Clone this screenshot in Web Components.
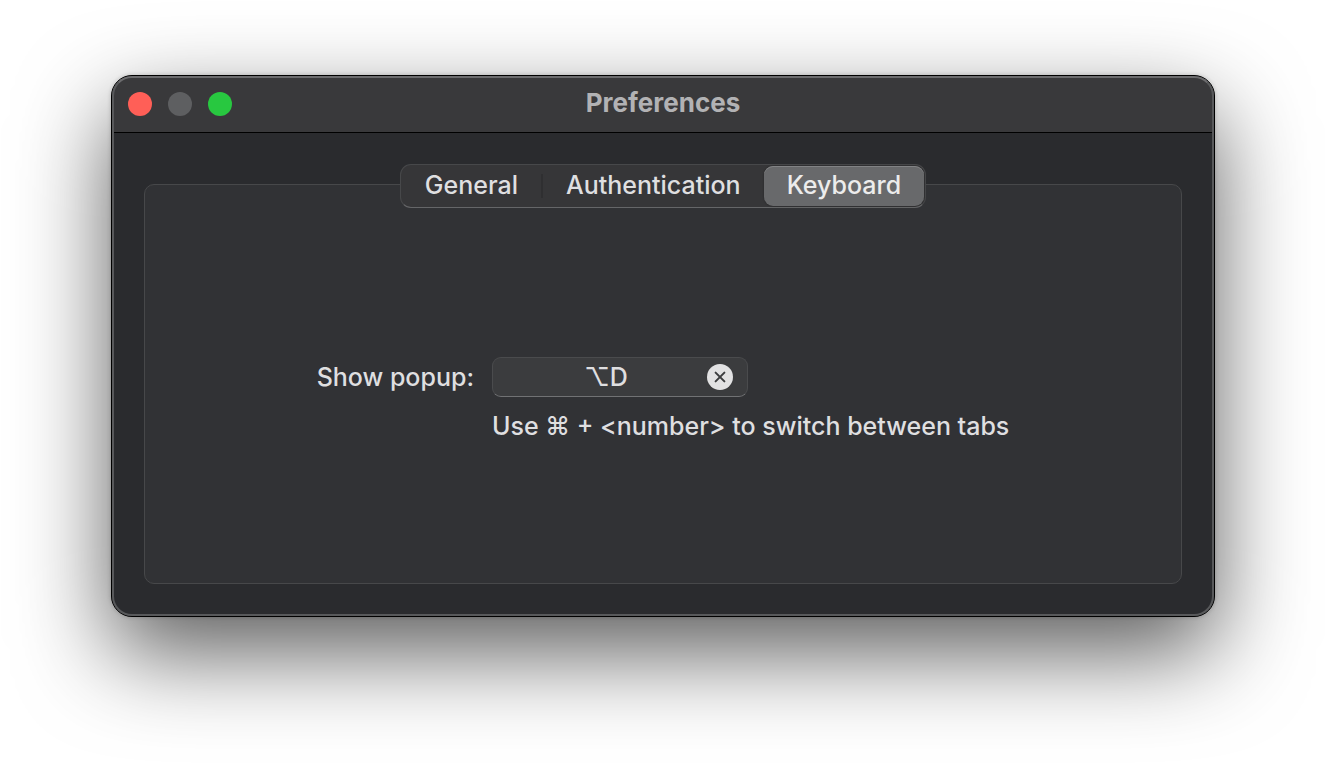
<!DOCTYPE html>
<html lang="en">
<head>
<meta charset="utf-8">
<meta name="viewport" content="width=device-width, initial-scale=1">
<title>Preferences</title>
<style>
  html { background: #fff; }
  body {
    box-sizing: border-box; min-height: 100vh;
    margin: 0; padding: 75px 111px 0;
    font: 500 25px/32px Inter, "Liberation Sans", sans-serif;
    color: #dfdfe0;
  }
</style>
</head>
<body>
<pref-window heading="Preferences">
  <tab-panel>
    <segment-tabs slot="tabs"></segment-tabs>
    <shortcut-form></shortcut-form>
  </tab-panel>
</pref-window>
<script>
class PrefWindow extends HTMLElement {
  constructor() {
    super();
    this.attachShadow({ mode: "open" }).innerHTML = `
      <style>
        * { box-sizing: border-box; }
        :host { display: block; }
        .frame {
          border: 1px solid #000; border-radius: 21px; background: #2a2b2e;
          box-shadow: 0 36px 92px rgba(0,0,0,.64), 0 0 4px rgba(0,0,0,.2);
          position: relative;
        }
        .frame::after {
          content: ""; position: absolute; inset: 0; pointer-events: none;
          border: 2px solid #58595b; border-top-color: #6c6c6e; border-radius: 20px;
        }
        header {
          display: grid; grid-template-columns: 1fr auto 1fr; align-items: center;
          height: 57px; padding: 0 16px; background: #39393b;
          border-bottom: 1px solid #000; border-radius: 20px 20px 0 0;
        }
        .lights { display: flex; gap: 16px; }
        button { width: 24px; height: 24px; padding: 0; border: 0; border-radius: 50%; }
        .close { background: #ff5f57; }
        .min { background: #5e5f61; }
        .zoom { background: #28c840; }
        h1 { margin: 0; padding-bottom: 2px; font-size: 26px; line-height: 32px; font-weight: 700; color: #b2b2b4; }
        main { padding: 31px 32px 32px; }
      </style>
      <div class="frame">
        <header>
          <div class="lights">
            <button class="close" aria-label="Close"></button>
            <button class="min" aria-label="Minimize" disabled></button>
            <button class="zoom" aria-label="Zoom"></button>
          </div>
          <h1></h1>
        </header>
        <main><slot></slot></main>
      </div>`;
  }
  connectedCallback() {
    this.shadowRoot.querySelector("h1").textContent = this.getAttribute("heading");
  }
}
customElements.define("pref-window", PrefWindow);

class TabPanel extends HTMLElement {
  constructor() {
    super();
    this.attachShadow({ mode: "open" }).innerHTML = `
      <style>
        * { box-sizing: border-box; }
        :host { display: block; }
        .tabs { display: flex; justify-content: center; position: relative; z-index: 1; }
        section {
          min-height: 400px; margin-top: -24px; padding-top: 30px;
          display: grid; place-items: center;
          background: #313235; border: 1px solid #47484a; border-radius: 10px;
        }
      </style>
      <div class="tabs"><slot name="tabs"></slot></div>
      <section role="tabpanel" aria-label="Keyboard"><slot></slot></section>`;
  }
}
customElements.define("tab-panel", TabPanel);

class SegmentTabs extends HTMLElement {
  constructor() {
    super();
    this.attachShadow({ mode: "open" }).innerHTML = `
      <style>
        * { box-sizing: border-box; }
        :host { display: block; }
        div {
          display: flex; align-items: center; height: 44px; padding: 1px;
          background: #363638; border: 1px solid #47484a; border-bottom-color: #656668;
          border-radius: 11px;
        }
        button {
          height: 40px; padding: 0 23px 2px; border: 0; border-radius: 9px;
          background: none; color: inherit; font: inherit; line-height: 32px;
        }
        i { width: 2px; height: 24px; background: #2f2f31; }
        [aria-selected=true] {
          background: #68696b; color: #ececec;
          box-shadow: inset 0 1px #828385, 0 0 2px rgba(0,0,0,.4);
        }
      </style>
      <div role="tablist">
        <button role="tab" aria-selected="false">General</button><i></i>
        <button role="tab" aria-selected="false">Authentication</button>
        <button role="tab" aria-selected="true">Keyboard</button>
      </div>`;
  }
}
customElements.define("segment-tabs", SegmentTabs);

class ShortcutForm extends HTMLElement {
  constructor() {
    super();
    this.attachShadow({ mode: "open" }).innerHTML = `
      <style>
        * { box-sizing: border-box; }
        :host { display: block; }
        form {
          display: grid; grid-template-columns: auto auto; align-items: center;
          column-gap: 18px; row-gap: 13px;
        }
        .field {
          display: flex; align-items: center; width: 256px; height: 40px; padding-right: 14px;
          background: #3b3c3e; border: 1px solid #4a4b4d; border-bottom-color: #717274;
          border-radius: 9px;
        }
        input {
          flex: 1; min-width: 0; height: 32px; padding: 0 0 0 12px; border: 0; outline: 0;
          background: none; color: inherit; font: inherit; text-align: center;
        }
        button { width: 26px; height: 26px; padding: 0; border: 0; background: none; }
        svg { display: block; }
        p { grid-column: 2; margin: 0; white-space: nowrap; }
      </style>
      <form>
        <label for="shortcut">Show popup:</label>
        <div class="field">
          <input id="shortcut" type="text" value="⌥D" readonly>
          <button type="button" aria-label="Clear shortcut">
            <svg width="26" height="26" viewBox="0 0 26 26" aria-hidden="true">
              <circle cx="13" cy="13" r="13" fill="#e2e2e3"/>
              <path d="M8.6 8.6l8.8 8.8M17.4 8.6l-8.8 8.8" stroke="#3b3c3e" stroke-width="2" stroke-linecap="round"/>
            </svg>
          </button>
        </div>
        <p>Use ⌘ + &lt;number&gt; to switch between tabs</p>
      </form>`;
  }
}
customElements.define("shortcut-form", ShortcutForm);
</script>
</body>
</html>
